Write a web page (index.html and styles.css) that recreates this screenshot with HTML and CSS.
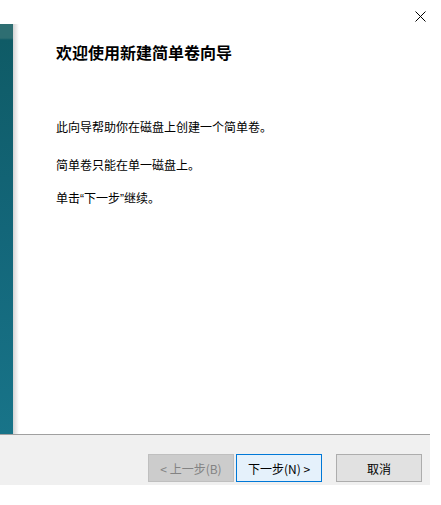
FILE: index.html
```html
<!DOCTYPE html>
<html lang="zh-CN">
<head>
    <meta charset="UTF-8">
    <meta name="viewport" content="width=device-width, initial-scale=1.0">
    <title>新建简单卷向导</title>
    <link rel="stylesheet" href="styles.css">
</head>
<body>
    <div class="wizard">
        <div class="title-bar">
            <span class="close-btn">
                <svg width="11" height="11" viewBox="0 0 11 11">
                    <path d="M0.5 0.5 L10.5 10.5 M10.5 0.5 L0.5 10.5" stroke="#000" stroke-width="1" fill="none"/>
                </svg>
            </span>
        </div>

        <div class="main">
            <div class="side-banner"></div>
            <div class="side-shadow"></div>
            <div class="content">
                <h1>欢迎使用新建简单卷向导</h1>
                <p class="first">此向导帮助你在磁盘上创建一个简单卷。</p>
                <p>简单卷只能在单一磁盘上。</p>
                <p class="last">单击<span class="quote">“</span>下一步<span class="quote">”</span>继续。</p>
            </div>
        </div>

        <div class="footer">
            <button class="btn disabled" disabled>&lt; 上一步(B)</button>
            <button class="btn primary">下一步(N) &gt;</button>
            <button class="btn cancel">取消</button>
        </div>
    </div>
</body>
</html>
```

FILE: styles.css
```css
body {
    margin: 0;
    background-color: #ffffff;
    font-family: "Microsoft YaHei", "Noto Sans CJK SC", sans-serif;
}

.wizard {
    width: 441px;
    height: 505px;
    background-color: #ffffff;
}

.title-bar {
    height: 24px;
    display: flex;
    justify-content: flex-end;
}

.close-btn {
    width: 11px;
    height: 11px;
    margin: 3px 15px 0 0;
}

.main {
    display: flex;
    height: 410px;
}

.side-banner {
    width: 13px;
    background: linear-gradient(to bottom, #2e6e72 0, #2e6e72 14px, #0f5b66 16px, #136679 50%, #187489 100%);
}

.side-shadow {
    width: 6px;
    background: linear-gradient(to right, #d4d4d4, #ffffff);
}

.content {
    flex: 1;
    padding-left: 37px;
}

h1 {
    margin: 17px 0 0;
    font-size: 16px;
    font-weight: bold;
    line-height: 22px;
    color: #000000;
}

p {
    margin: 0;
    font-size: 12px;
    line-height: 16px;
    color: #000000;
}

p.first {
    margin-top: 56px;
}

p + p {
    margin-top: 22px;
}

p.last {
    margin-top: 17px;
}

.quote {
    font-family: "Liberation Sans", sans-serif;
}

.footer {
    width: 430px;
    height: 51px;
    background-color: #f0f0f0;
    border-top: 1px solid #a0a0a0;
    display: flex;
    align-items: flex-start;
    padding-top: 19px;
    box-sizing: border-box;
    padding-left: 148px;
}

.btn {
    width: 86px;
    height: 28px;
    font-family: "Microsoft YaHei", "Noto Sans CJK SC", sans-serif;
    font-size: 12px;
    color: #000000;
    background-color: #e1e1e1;
    border: 1px solid #adadad;
    padding: 0;
    margin: 0;
}

.btn.disabled {
    background-color: #cccccc;
    border-color: #bfbfbf;
    color: #838383;
}

.btn.primary {
    margin-left: 2px;
    background-color: #e5f1fb;
    border-color: #0078d7;
}

.btn.cancel {
    margin-left: 14px;
}
```
